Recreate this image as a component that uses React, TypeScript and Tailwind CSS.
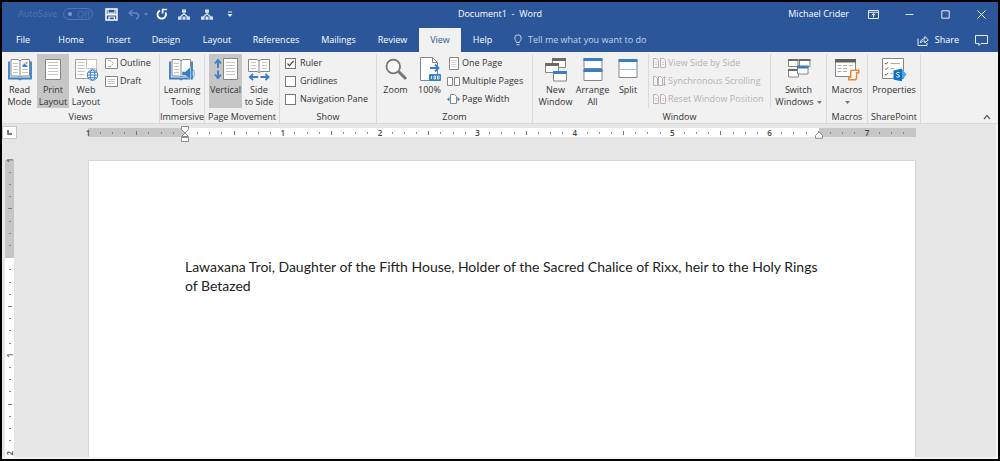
import type { ReactNode } from "react";

const GREY = "#858585";
const BLUE = "#367fc4";

/* ---------- title bar icons ---------- */

const SaveIcon = () => (
  <svg width="13" height="13" viewBox="0 0 13 13" fill="none" stroke="#fff" strokeWidth="1.5">
    <path d="M1 1h11v11H1z" />
    <path d="M3 1v4h7V1" strokeWidth="1" />
    <path d="M1 6.500h11" strokeWidth="2" />
    <path d="M4 12V9h5.500v3" strokeWidth="1.200" />
  </svg>
);

const UndoIcon = () => (
  <svg width="12" height="11" viewBox="0 0 12 11" fill="none" stroke="#6486bf" strokeWidth="1.600">
    <path d="M4.500 1 1.200 4 4.500 7M1.500 4H7.500C9.300 4 10.500 5.200 10.500 6.800S9.300 9.800 7.800 9.800" />
  </svg>
);

const RedoIcon = () => (
  <svg width="12" height="12" viewBox="0 0 12 12" fill="none" stroke="#fff" strokeWidth="1.900">
    <path d="M4 2.600A4.200 4.200 0 1 0 9.400 4.400" />
    <path d="M6.600 5.400V1.500H11" strokeWidth="1.700" />
  </svg>
);

const TreeIcon = () => (
  <svg width="12" height="11" viewBox="0 0 12 11" fill="#d5dfef">
    <path d="M4 .5h4v3.300H4zM0 7.500h3.600v3.300H0zM8.400 7.500H12v3.300H8.400zM4.500 7.500h3v3.300h-3z" />
    <path d="M6 3.500v2M2 8 6 4.800 10 8" fill="none" stroke="#d5dfef" strokeWidth="1.300" />
  </svg>
);

const MoreIcon = () => (
  <svg width="6" height="7" viewBox="0 0 6 7" fill="#e6ecf6">
    <path d="M1 .5h4v1H1zM.5 3h5L3 6z" />
  </svg>
);

const RibbonOptionsIcon = () => (
  <svg width="11" height="9" viewBox="0 0 11 9" fill="none" stroke="#e6ecf6">
    <path d="M.5.5h10v8H.5zM.5 2.300h10" />
    <path d="M5.500 7.500v-4M3.800 5.200l1.700-1.700 1.700 1.700" />
  </svg>
);

const MinimizeIcon = () => (
  <svg width="9" height="9" viewBox="0 0 9 9" stroke="#d5dfef">
    <path d="M.5 4.500h8" />
  </svg>
);

const MaximizeIcon = () => (
  <svg width="9" height="9" viewBox="0 0 9 9" stroke="#e6ecf6" fill="none">
    <path d="M.8.8h7.400v7.400H.8z" />
  </svg>
);

const CloseIcon = () => (
  <svg width="9" height="9" viewBox="0 0 9 9" stroke="#fff" fill="none">
    <path d="m.5.5 8 8M8.500.5l-8 8" />
  </svg>
);

const BulbIcon = () => (
  <svg width="8" height="12" viewBox="0 0 8 12" fill="none" stroke="#c5d2e8">
    <path d="M2.500 8.500C2.500 7 .8 6.200.8 4A3.200 3.200 0 0 1 7.200 4c0 2.200-1.700 3-1.700 4.500zM2.500 10.700h3" />
  </svg>
);

const ShareIcon = () => (
  <svg width="12" height="11" viewBox="0 0 12 11" fill="none" stroke="#e6ecf6">
    <path d="M1 3.500v7h9V8" />
    <path d="M3.300 8c.3-2.800 1.800-4.200 4.500-4.200V1.500l3.500 3.400L7.800 8V5.900C5.800 5.900 4.500 6.500 3.300 8z" />
  </svg>
);

const CommentIcon = () => (
  <svg width="13" height="11" viewBox="0 0 13 11" fill="none" stroke="#e6ecf6">
    <path d="M.5.5h12v8H6l-2 2v-2H.5z" />
  </svg>
);

/* ---------- ribbon icons ---------- */

const BookBase = () => (
  <>
    <path d="M1 4.500v17h9.500l1.500 1 1.500-1H23v-17" fill="none" stroke={BLUE} strokeWidth="1.800" />
    <path d="M3 2.500h7l2 1.300 2-1.300h7.500V19H14l-2 1.300L10 19H3z" fill="#fff" stroke={GREY} />
    <path d="M12 4v16" stroke={GREY} />
    <path d="M5 6.500h5M5 9.500h5M5 12.500h5M5 15.500h5" stroke="#c4c4c4" />
  </>
);

const ReadIcon = () => (
  <svg width="24" height="24" viewBox="0 0 24 24">
    <BookBase />
    <path d="M14.500 5h5.500v5h-5.500z" fill="#dbe9f6" />
    <path d="M14.500 10V8.500l2-2 3.500 3.500z" fill={BLUE} />
    <circle cx="18.500" cy="6" r="1" fill="#e8892f" />
    <path d="M14 12.500h6M14 15.500h6" stroke="#c4c4c4" />
  </svg>
);

const PageIcon = () => (
  <svg width="24" height="24" viewBox="0 0 24 24">
    <path d="M4.500 2.500h15v20h-15z" fill="#fff" stroke={GREY} />
    <path d="M7 5.500h10M7 8.500h10M7 11.500h10M7 14.500h10M7 17.500h10" stroke="#c4c4c4" />
  </svg>
);

const Globe = () => (
  <g fill="#fff" stroke={BLUE}>
    <circle cx="18.500" cy="18" r="5.200" />
    <ellipse cx="18.500" cy="18" rx="2.300" ry="5.200" fill="none" />
    <path d="M13.300 18h10.400M14.300 15.300h8.400M14.300 20.700h8.400" />
  </g>
);

const WebIcon = () => (
  <svg width="25" height="24" viewBox="0 0 25 24">
    <path d="M1.500 2.500h21v19h-21z" fill="#fff" stroke="#a0a0a0" />
    <path d="M12.500 2.500h10v9h-10zM3.500 5.500h7M3.500 8.500h7M3.500 11.500h7M3.500 14.500h7M3.500 17.500h7" fill="none" stroke="#c4c4c4" />
    <Globe />
  </svg>
);

const LearningIcon = () => (
  <svg width="26" height="24" viewBox="0 0 26 24">
    <BookBase />
    <path d="M13 14.500h3.500l5-4.500v13l-5-4.500H13z" fill={BLUE} stroke="#f1f1f1" strokeWidth=".5" />
    <path d="M22.800 14c1 1.500 1 3.500 0 5M24.200 12.500c1.600 2.500 1.600 5.500 0 8" stroke="#6aa3d8" fill="none" />
  </svg>
);

const VerticalIcon = () => (
  <svg width="24" height="24" viewBox="0 0 24 24">
    <path d="M9.500 1.500h14v21h-14z" fill="#fff" stroke={GREY} />
    <path d="M12 5.500h9M12 8.500h9M12 11.500h9M12 14.500h9M12 17.500h9" stroke="#c4c4c4" />
    <path d="M4 4v7M1 6.500l3-3.500 3 3.500M4 13.500v7M1 17.500 4 21l3-3.500" fill="none" stroke={BLUE} strokeWidth="1.800" />
  </svg>
);

const SideIcon = () => (
  <svg width="24" height="24" viewBox="0 0 24 24">
    <path d="M1.500 2.500h8.500l2 1.300 2-1.300h8.500v12H14l-2 1-2-1H1.500z" fill="#fff" stroke={GREY} />
    <path d="M12 4v11" stroke={GREY} />
    <path d="M4 5.500h5M4 8.500h5M4 11.500h5M15 5.500h5M15 8.500h5M15 11.500h5" stroke="#c4c4c4" />
    <path d="M3 20h8M6 17l-3.200 3L6 23M13.500 20h8M18.500 17l3.200 3-3.200 3" fill="none" stroke={BLUE} strokeWidth="1.800" />
  </svg>
);

const ZoomIcon = () => (
  <svg width="24" height="24" viewBox="0 0 24 24">
    <circle cx="9.300" cy="9.500" r="6.800" fill="#fafafa" stroke="#757575" strokeWidth="1.800" />
    <path d="m14.500 14.500 7.500 7.500" stroke="#757575" strokeWidth="3" />
  </svg>
);

const HundredIcon = () => (
  <svg width="24" height="26" viewBox="0 0 24 26">
    <path d="M2.500 1.500h12l5 5v18h-17z" fill="#fff" stroke={GREY} />
    <path d="M14.500 1.500v5h5" fill="none" stroke={GREY} />
    <path d="M12 12h8M17 8.500l3.500 3.500-3.500 3.500" fill="none" stroke={BLUE} strokeWidth="1.800" />
    <rect x="11" y="18" width="12" height="7" rx="1" fill={BLUE} />
    <path d="M13.500 20v3M16 20h1.500v3H16zM19.500 20H21v3h-1.500z" fill="none" stroke="#fff" strokeWidth=".8" />
  </svg>
);

const NewWindowIcon = () => (
  <svg width="24" height="25" viewBox="0 0 24 25">
    <path d="M8.500 1.500h13v9h-13z" fill="#fff" stroke={GREY} />
    <path d="M8 1h14v3H8z" fill="#6a6a6a" />
    <path d="M1.500 6.500h13v9h-13z" fill="#fff" stroke={GREY} />
    <path d="M1 6h14v3H1z" fill="#6a6a6a" />
    <path d="M9.500 14.500h13v9.500h-13z" fill="#fff" stroke={GREY} />
    <path d="M9 14h14v3H9z" fill={BLUE} />
  </svg>
);

const ArrangeIcon = () => (
  <svg width="24" height="25" viewBox="0 0 24 25">
    <path d="M3 1.500h18v10H3zM3 12.500h18v11H3z" fill="#fff" stroke={GREY} />
    <path d="M2.500 1h19v3h-19zM2.500 12h19v3h-19z" fill={BLUE} />
  </svg>
);

const SplitIcon = () => (
  <svg width="24" height="25" viewBox="0 0 24 25">
    <path d="M3 2.500h18v18H3z" fill="#fff" stroke={GREY} />
    <path d="M2.500 2h19v3h-19z" fill={BLUE} />
    <path d="M3.500 12.500h17" stroke="#9cc0e2" />
  </svg>
);

const SwitchIcon = () => (
  <svg width="24" height="24" viewBox="0 0 24 24">
    <path d="M1.500 2.500h9.500v7H1.500zM12.500 2.500H23v7H12.500zM1.500 12.500h10v7.500h-10z" fill="#fff" stroke={GREY} />
    <path d="M1 2h10.500v2H1zM12 2h11.500v2H12zM1 12h9v2H1z" fill="#6a6a6a" />
    <path d="M10.500 9.500H21V17H10.500z" fill="#fff" stroke={GREY} />
    <path d="M10 8.500h11.500v3H10z" fill={BLUE} />
  </svg>
);

const MacrosIcon = () => (
  <svg width="26" height="24" viewBox="0 0 26 24">
    <path d="M1.500 2.500h20v17h-20z" fill="#fff" stroke={GREY} />
    <path d="M1 2h21v3.500H1z" fill="#5f5f5f" />
    <path d="M3.500 8.500h4M9 8.500h4M15 8.500h4M3.500 11.500h4M9 11.500h4M3.500 14.500h4M9 14.500h4" stroke="#b0b0b0" />
    <path d="M18 13.200h6.800v2.500h-2.300V21c0 1-.7 1.800-2 1.800h-5.800v-2.500h2v-5.500c0-1 .5-1.600 1.300-1.600z" fill="#fff" stroke="#ee8330" strokeWidth="1.500" />
  </svg>
);

const PropertiesIcon = () => (
  <svg width="26" height="24" viewBox="0 0 26 24">
    <path d="M1.500 1.500h21v20h-21z" fill="#fff" stroke={GREY} />
    <path d="m4 6 1.200 1.200L7 5M4 11.500l1.200 1.200L7 10.500M4 17l1.200 1.200L7 16" fill="none" stroke="#666" />
    <path d="M9.500 6.500H19M9.500 11.500H13M9.500 16.500H12" stroke="#aaa" />
    <path d="M19 12.500h2.500l4 5-4 5H19z" fill="#4aa3e6" />
    <path d="m12.500 13.500 8.500-2v13l-8.500-2z" fill="#0f72c4" />
    <path d="M18.500 15.800c-1.400-.8-3-.3-3 .7 0 1.400 3 1 3 2.500 0 1.200-1.800 1.500-3.200.6" fill="none" stroke="#fff" />
  </svg>
);

const OutlineIcon = () => (
  <svg width="13" height="13" viewBox="0 0 13 13">
    <path d="M.5 1.500h12v10H.5z" fill="#fff" stroke={GREY} />
    <path d="M3 3.500h3M3 9.500h3M6.500 4.500l2 2-2 2" fill="none" stroke="#a8a8a8" />
  </svg>
);

const DraftIcon = () => (
  <svg width="13" height="13" viewBox="0 0 13 13">
    <path d="M.5 1.500h12v10H.5z" fill="#fff" stroke={GREY} />
    <path d="M3 4.500h7M3 6.500h7M3 8.500h7" stroke="#c4c4c4" />
  </svg>
);

const OnePageIcon = () => (
  <svg width="13" height="13" viewBox="0 0 13 13">
    <path d="M2.500.5h9v12h-9z" fill="#fff" stroke={GREY} />
    <path d="M4.500 3.500h5M4.500 5.500h5M4.500 7.500h5M4.500 9.500h5" stroke="#d4d4d4" />
  </svg>
);

const MultiPageIcon = () => (
  <svg width="13" height="13" viewBox="0 0 13 13" fill="#fff" stroke={GREY}>
    <path d="M.5 2.500h5v8h-5zM7.500 2.500h5v8h-5z" />
  </svg>
);

const PageWidthIcon = () => (
  <svg width="13" height="13" viewBox="0 0 13 13">
    <path d="M3.500 1.500h4l2 2v7h-6z" fill="#fff" stroke={GREY} />
    <path d="M2.500 4 0 6.200l2.500 2.300zM10.500 4 13 6.200l-2.500 2.300z" fill={BLUE} />
  </svg>
);

const PairIcon = () => (
  <svg width="13" height="12" viewBox="0 0 13 12" fill="#f6f4f6" stroke="#b9b0b9">
    <path d="M.5 1.500h3l2 2v7h-5zM7.500 1.500h3l2 2v7h-5z" />
    <path d="M2 5.500h2M2 7.500h2M9 5.500h2M9 7.500h2" stroke="#d0c8d0" />
  </svg>
);

const SyncIcon = () => (
  <svg width="13" height="12" viewBox="0 0 13 12" fill="#f6f4f6" stroke="#b9b0b9">
    <path d="M.5 1.500h2l2 2v7h-4zM5.500 1.500h2l2 2v7h-4z" />
    <path d="M11.500 2v8M10.500 3l1-1.500 1 1.500M10.500 9l1 1.500 1-1.500" fill="none" />
  </svg>
);

const CaretIcon = () => (
  <svg width="5" height="3" viewBox="0 0 5 3" fill="#777">
    <path d="M0 0h5L2.500 3z" />
  </svg>
);

const CollapseIcon = () => (
  <svg width="8" height="6" viewBox="0 0 8 6" fill="none" stroke="#666" strokeWidth="1.400">
    <path d="m1 5 3-3.500L7 5" />
  </svg>
);

/* ---------- ribbon building blocks ---------- */

function BigButton({
  icon,
  lines,
  width,
  active = false,
  caret = false,
}: {
  icon: ReactNode;
  lines: string[];
  width: string;
  active?: boolean;
  caret?: boolean;
}) {
  return (
    <button
      type="button"
      aria-pressed={active}
      className={`flex h-[54px] shrink-0 flex-col items-center whitespace-nowrap ${width} ${active ? "bg-[#c6c6c6]" : ""}`}
    >
      <span className="flex h-[30px] items-center justify-center">{icon}</span>
      {lines.map((line, i) => (
        <span key={line} className="flex h-3 items-center gap-[3px] leading-3">
          {line}
          {caret && i > 0 && i === lines.length - 1 && <CaretIcon />}
        </span>
      ))}
      {caret && lines.length === 1 && (
        <span className="flex h-3 items-center">
          <CaretIcon />
        </span>
      )}
    </button>
  );
}

function SmallButton({ icon, label, disabled = false }: { icon: ReactNode; label: string; disabled?: boolean }) {
  return (
    <button
      type="button"
      disabled={disabled}
      className={`flex h-[18px] items-center gap-[2px] whitespace-nowrap ${disabled ? "text-[#b3b3b3]" : ""}`}
    >
      {icon}
      {label}
    </button>
  );
}

function Check({ label, checked = false }: { label: string; checked?: boolean }) {
  return (
    <label className="flex h-[18px] items-center gap-1 whitespace-nowrap">
      <span className="relative flex">
        <input
          type="checkbox"
          defaultChecked={checked}
          className="peer size-[11px] appearance-none border border-[#777] bg-white"
        />
        <svg
          className="pointer-events-none absolute inset-0 hidden peer-checked:block"
          width="11"
          height="11"
          viewBox="0 0 11 11"
          fill="none"
          stroke="#444"
        >
          <path d="m2.500 5.500 2 2.200 4-4.700" strokeWidth="1.200" />
        </svg>
      </span>
      {label}
    </label>
  );
}

function Group({ label, width, children }: { label: string; width: string; children: ReactNode }) {
  return (
    <section aria-label={label} className={`flex shrink-0 flex-col border-r border-[#dadada] ${width}`}>
      <div className="flex h-[57px] items-start">{children}</div>
      <div className="text-center leading-3 whitespace-nowrap">{label}</div>
    </section>
  );
}

/* ---------- rulers ---------- */

const H_MARKS = Array.from({ length: 69 }, (_, i) => i);
const V_MARKS = Array.from({ length: 25 }, (_, i) => i);

function HorizontalRuler() {
  return (
    <div className="relative h-[9px] flex-1">
      <div className="flex h-full">
        <div className="grow-[8] basis-0 bg-[#c6c6c6]" />
        <div className="grow-[52] basis-0 bg-white" />
        <div className="grow-[8] basis-0 bg-[#c6c6c6]" />
      </div>
      <div className="absolute inset-0 flex items-center justify-between text-[8px] leading-[8px] font-semibold text-[#444]">
        {H_MARKS.map((i) => {
          const inch = Math.abs(i - 8) / 8;
          return (
            <span key={i} className="flex w-0 justify-center">
              {i % 8 === 0 ? (
                inch > 0 && <span>{inch}</span>
              ) : i === 68 ? null : i % 4 === 0 ? (
                <span className="h-1 w-px shrink-0 bg-[#777]" />
              ) : (
                <span className="h-[2px] w-px shrink-0 bg-[#888]" />
              )}
            </span>
          );
        })}
      </div>
      <div className="absolute inset-0 flex">
        <div className="flex min-w-0 grow-[8] basis-0 justify-end">
          <svg className="-mt-[2px] -mr-1 h-4 w-2 shrink-0" viewBox="0 0 8 16" fill="#fff" stroke="#8a8a8a">
            <path d="M.5.5h7v3L4 7 .5 3.500zM.5 10.500 4 7l3.500 3.500zM.5 11.500h7v4h-7z" />
          </svg>
        </div>
        <div className="flex min-w-0 grow-[52] basis-0 justify-end">
          <svg className="mt-[3px] -mr-1 h-2 w-2 shrink-0" viewBox="0 0 8 8" fill="#fff" stroke="#8a8a8a">
            <path d="M4 .8.5 4.500v2.800h7V4.500z" />
          </svg>
        </div>
        <div className="grow-[8] basis-0" />
      </div>
    </div>
  );
}

function VerticalRuler() {
  return (
    <div className="relative w-[9px] bg-white">
      <div className="h-[98px] bg-[#c6c6c6]" />
      <div className="absolute inset-x-0 top-0 flex h-[293px] flex-col items-center justify-between text-[8px] leading-[8px] font-semibold text-[#444]">
        {V_MARKS.map((i) => {
          const inch = Math.abs(i - 8) / 8;
          return (
            <span key={i} className="flex h-0 items-center">
              {i % 8 === 0 ? (
                inch > 0 && <span className="rotate-180 [writing-mode:vertical-rl]">{inch}</span>
              ) : i % 4 === 0 ? (
                <span className="h-px w-1 shrink-0 bg-[#777]" />
              ) : (
                <span className="h-px w-[2px] shrink-0 bg-[#888]" />
              )}
            </span>
          );
        })}
      </div>
    </div>
  );
}

/* ---------- app ---------- */

const TABS: { name: string; width: string }[] = [
  { name: "File", width: "w-[42px]" },
  { name: "Home", width: "w-[54px]" },
  { name: "Insert", width: "w-[41px]" },
  { name: "Design", width: "w-[54px]" },
  { name: "Layout", width: "w-[48px]" },
  { name: "References", width: "w-[70px]" },
  { name: "Mailings", width: "w-[55px]" },
  { name: "Review", width: "w-[53px]" },
  { name: "View", width: "w-[42px]" },
  { name: "Help", width: "w-[43px]" },
];

export default function App() {
  return (
    <div className="flex min-h-screen flex-col border-2 border-black bg-[#e6e6e6] font-['Open_Sans','Noto_Sans',sans-serif] text-[9px] text-[#333]">
      <header className="bg-[#2b579a] text-white">
        <div className="grid h-6 grid-cols-[1fr_auto_1fr] items-center">
          <div className="flex items-center pl-4 text-[#5075b0]">
            <span className="w-[45px]">AutoSave</span>
            <button
              type="button"
              className="mr-3 flex h-3 w-[30px] items-center gap-[5px] rounded-full border border-[#5075b0] pl-1 leading-none"
            >
              <span className="size-1 rounded-full bg-[#7d9bcb]" />
              Off
            </button>
            <button type="button" aria-label="Save" className="mr-[10px]">
              <SaveIcon />
            </button>
            <button type="button" aria-label="Undo" className="mr-2 flex items-center gap-1">
              <UndoIcon />
              <svg width="4" height="3" viewBox="0 0 4 3" fill="#6486bf">
                <path d="M0 0h4L2 3z" />
              </svg>
            </button>
            <button type="button" aria-label="Redo" className="mr-[10px]">
              <RedoIcon />
            </button>
            <button type="button" aria-label="Hierarchy" className="mr-[11px]">
              <TreeIcon />
            </button>
            <button type="button" aria-label="Organization chart" className="mr-[14px]">
              <TreeIcon />
            </button>
            <button type="button" aria-label="Customize toolbar">
              <MoreIcon />
            </button>
          </div>
          <h1>Document1&nbsp; - &nbsp;Word</h1>
          <div className="flex items-center justify-end pr-3">
            <span className="mr-[19px]">Michael Crider</span>
            <button type="button" aria-label="Ribbon display options" className="mr-[26px]">
              <RibbonOptionsIcon />
            </button>
            <button type="button" aria-label="Minimize" className="mr-[27px]">
              <MinimizeIcon />
            </button>
            <button type="button" aria-label="Maximize" className="mr-[27px]">
              <MaximizeIcon />
            </button>
            <button type="button" aria-label="Close">
              <CloseIcon />
            </button>
          </div>
        </div>
        <nav className="flex h-[26px] items-stretch pt-[2px]">
          {TABS.map((tab) => (
            <button
              key={tab.name}
              type="button"
              className={`${tab.width} ${tab.name === "View" ? "bg-[#f1f1f1] text-[#2b579a]" : ""}`}
            >
              {tab.name}
            </button>
          ))}
          <button type="button" className="ml-[10px] flex items-center gap-[6px] text-[#c5d2e8]">
            <BulbIcon />
            Tell me what you want to do
          </button>
          <button type="button" className="ml-auto flex items-center gap-[6px]">
            <ShareIcon />
            Share
          </button>
          <button type="button" aria-label="Comments" className="mr-[10px] ml-4">
            <CommentIcon />
          </button>
        </nav>
      </header>

      <div className="flex border-b border-[#dadada] bg-[#f1f1f1] pt-[2px]">
        <Group label="Views" width="w-[158px]">
          <BigButton icon={<ReadIcon />} lines={["Read", "Mode"]} width="w-[35px]" />
          <BigButton icon={<PageIcon />} lines={["Print", "Layout"]} width="w-8" active />
          <BigButton icon={<WebIcon />} lines={["Web", "Layout"]} width="w-[34px]" />
          <div className="pl-[2px]">
            <SmallButton icon={<OutlineIcon />} label="Outline" />
            <SmallButton icon={<DraftIcon />} label="Draft" />
          </div>
        </Group>
        <Group label="Immersive" width="w-[45px]">
          <BigButton icon={<LearningIcon />} lines={["Learning", "Tools"]} width="w-[44px]" />
        </Group>
        <Group label="Page Movement" width="w-[75px]">
          <div className="flex pl-1">
            <BigButton icon={<VerticalIcon />} lines={["Vertical"]} width="w-[33px]" active />
            <BigButton icon={<SideIcon />} lines={["Side", "to Side"]} width="w-[34px]" />
          </div>
        </Group>
        <Group label="Show" width="w-[97px]">
          <div className="pl-[5px]">
            <Check label="Ruler" checked />
            <Check label="Gridlines" />
            <Check label="Navigation Pane" />
          </div>
        </Group>
        <Group label="Zoom" width="w-[156px]">
          <div className="flex pl-[2px]">
            <BigButton icon={<ZoomIcon />} lines={["Zoom"]} width="w-[33px]" />
            <BigButton icon={<HundredIcon />} lines={["100%"]} width="w-[35px]" />
          </div>
          <div>
            <SmallButton icon={<OnePageIcon />} label="One Page" />
            <SmallButton icon={<MultiPageIcon />} label="Multiple Pages" />
            <SmallButton icon={<PageWidthIcon />} label="Page Width" />
          </div>
        </Group>
        <Group label="Window" width="w-[294px]">
          <div className="flex pl-1">
            <BigButton icon={<NewWindowIcon />} lines={["New", "Window"]} width="w-[37px]" />
            <BigButton icon={<ArrangeIcon />} lines={["Arrange", "All"]} width="w-[37px]" />
            <BigButton icon={<SplitIcon />} lines={["Split"]} width="w-[34px]" />
          </div>
          <div className="ml-[3px] w-[124px] border-x border-[#dadada] pl-1">
            <SmallButton icon={<PairIcon />} label="View Side by Side" disabled />
            <SmallButton icon={<SyncIcon />} label="Synchronous Scrolling" disabled />
            <SmallButton icon={<PairIcon />} label="Reset Window Position" disabled />
          </div>
          <BigButton icon={<SwitchIcon />} lines={["Switch", "Windows"]} width="w-[55px]" caret />
        </Group>
        <Group label="Macros" width="w-[41px]">
          <BigButton icon={<MacrosIcon />} lines={["Macros"]} width="w-10" caret />
        </Group>
        <Group label="SharePoint" width="w-[53px]">
          <BigButton icon={<PropertiesIcon />} lines={["Properties"]} width="w-[52px]" />
        </Group>
        <button type="button" aria-label="Collapse ribbon" className="mr-[7px] ml-auto self-end pb-[3px]">
          <CollapseIcon />
        </button>
      </div>

      <div className="flex grow flex-col border-r-2 border-b-2 border-[#f4f4f0]">
        <div className="flex items-center pt-[2px] pr-20">
          <button
            type="button"
            aria-label="Tab stop"
            className="mr-[71px] flex h-[13px] w-[15px] items-center justify-center border border-[#c6c6c6] bg-white"
          >
            <svg width="5" height="5" viewBox="0 0 5 5" fill="none" stroke="#555" strokeWidth="1.600">
              <path d="M1 0v4h4" />
            </svg>
          </button>
          <HorizontalRuler />
        </div>
        <div className="mt-[21px] flex grow items-stretch pr-20 pl-[3px]">
          <VerticalRuler />
          <main className="ml-[74px] flex-1 border border-b-0 border-[#d4d4d4] bg-white pt-24 pr-[84px] pl-24 font-[Lato,'Open_Sans',sans-serif] text-[14px] leading-[19px] text-[#222]">
            <p>
              Lawaxana Troi, Daughter of the Fifth House, Holder of the Sacred Chalice of Rixx, heir to the Holy Rings
              of Betazed
            </p>
          </main>
        </div>
      </div>
    </div>
  );
}
